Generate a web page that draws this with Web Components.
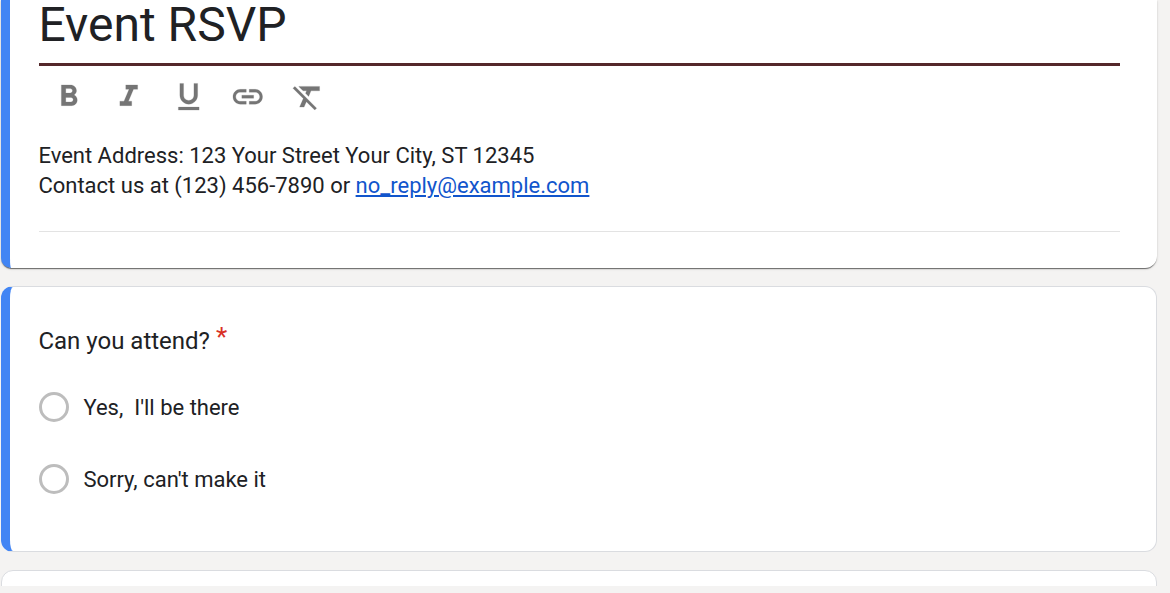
<!DOCTYPE html>
<html>
<head>
<meta charset="utf-8">
<title>Event RSVP</title>
<style>
html, body { margin: 0; height: 100%; background: #f4f3f2; overflow: hidden; }
body { font-family: Roboto, "Liberation Sans", sans-serif; color: #202124; }
</style>
</head>
<body>
<form-page>
  <form-card accent shadow>
    <title-input>Event RSVP</title-input>
    <format-toolbar></format-toolbar>
    <form-description>
      Event Address: 123 Your Street Your City, ST 12345<br>
      Contact us at (123) 456-7890 or <a href="#">no_reply@example.com</a>
    </form-description>
  </form-card>
  <form-card accent roomy>
    <form-question required>Can you attend?</form-question>
    <radio-option>Yes,&nbsp; I'll be there</radio-option>
    <radio-option>Sorry, can't make it</radio-option>
  </form-card>
  <form-card></form-card>
</form-page>

<script>
class FormPage extends HTMLElement {
  constructor() {
    super();
    this.attachShadow({mode: "open"});
    this.shadowRoot.innerHTML = `
<style>
:host { display: block; }
#clip { height: 586px; overflow: hidden; padding: 0 13.5px 0 1px; display: flex; flex-direction: column; gap: 18px; box-sizing: border-box; }
</style>
<div id="clip"><slot></slot></div>`;
  }
}
customElements.define("form-page", FormPage);

class FormCard extends HTMLElement {
  constructor() {
    super();
    this.attachShadow({mode: "open"});
    this.shadowRoot.innerHTML = `
<style>
:host { display: block; flex: none; box-sizing: border-box; background: #fff; border: 1px solid #dadce0; border-radius: 12px; padding: 0 35.5px 0 28px; min-height: 60px; }
:host([accent]) { border-left: 9px solid #4285f4; padding-left: 29px; }
:host([roomy]) { padding-bottom: 36px; }
:host([shadow]) { border: 0; border-left: 9px solid #4285f4; border-radius: 0 0 12px 10px; padding-right: 36.5px; box-shadow: 0 2px 1px -1px rgba(0,0,0,.4), 0 1px 1px rgba(0,0,0,.2), 0 1px 3px rgba(0,0,0,.12); }
</style>
<slot></slot>`;
  }
}
customElements.define("form-card", FormCard);

class TitleInput extends HTMLElement {
  constructor() {
    super();
    this.attachShadow({mode: "open"});
    this.shadowRoot.innerHTML = `
<style>
:host { display: flex; align-items: flex-end; height: 63px; overflow: hidden; border-bottom: 3px solid #54282a; font-size: 48px; line-height: 64px; color: #202124; }
span { display: block; margin: 0 0 6px -0.6px; white-space: nowrap; }
</style>
<span><slot></slot></span>`;
  }
}
customElements.define("title-input", TitleInput);

const ICONS = [
  "M15.6 10.79c.97-.67 1.65-1.77 1.65-2.79 0-2.26-1.75-4-4-4H7v14h7.04c2.09 0 3.71-1.7 3.71-3.79 0-1.52-.86-2.82-2.15-3.42zM10 6.5h3c.83 0 1.5.67 1.5 1.5s-.67 1.5-1.5 1.5h-3v-3zm3.5 9H10v-3h3.5c.83 0 1.5.67 1.5 1.5s-.67 1.5-1.5 1.5z",
  "M10 4v3h2.21l-3.42 8H6v3h8v-3h-2.21l3.42-8H18V4z",
  "M12 17c3.31 0 6-2.69 6-6V3h-2.5v8c0 1.93-1.57 3.5-3.5 3.5S8.5 12.93 8.5 11V3H6v8c0 3.31 2.69 6 6 6zm-7 2v2h14v-2H5z",
  "M3.9 12c0-1.71 1.39-3.1 3.1-3.1h4V7H7c-2.76 0-5 2.24-5 5s2.24 5 5 5h4v-1.9H7c-1.71 0-3.1-1.39-3.1-3.1zM8 13h8v-2H8v2zm9-6h-4v1.9h4c1.71 0 3.1 1.39 3.1 3.1s-1.39 3.1-3.1 3.1h-4V17h4c2.76 0 5-2.24 5-5s-2.24-5-5-5z",
  "M3.27 5L2 6.27l6.97 6.97L6.5 19h3l1.57-3.66L16.73 21 18 19.73 3.55 5.27 3.27 5zM6 5v.18L8.82 8h2.4l-.72 1.68 2.1 2.1L14.21 8H20V5H6z"
];

class FormatToolbar extends HTMLElement {
  constructor() {
    super();
    this.attachShadow({mode: "open"});
    this.shadowRoot.innerHTML = `
<style>
:host { display: flex; gap: 24.25px; padding: 13px 0 0 12px; height: 36px; }
svg { width: 35.5px; height: 35.5px; fill: #757575; stroke: #757575; stroke-width: .15; flex: none; }
</style>
${ICONS.map(d => `<svg viewBox="0 0 24 24"><path d="${d}"/></svg>`).join("")}`;
  }
}
customElements.define("format-toolbar", FormatToolbar);

class FormDescription extends HTMLElement {
  constructor() {
    super();
    this.attachShadow({mode: "open"});
    this.shadowRoot.innerHTML = `
<style>
:host { display: block; margin-top: 26px; padding-bottom: 40px; height: 50px; border-bottom: 1px solid #e3e3e3; font-size: 22px; line-height: 30px; margin-bottom: 36px; }
div { margin-left: -0.6px; }
::slotted(a) { color: #1155cc; }
</style>
<div><slot></slot></div>`;
  }
}
customElements.define("form-description", FormDescription);

class FormQuestion extends HTMLElement {
  constructor() {
    super();
    this.attachShadow({mode: "open"});
    this.shadowRoot.innerHTML = `
<style>
:host { display: block; padding: 39px 0 0 0; font-size: 24px; line-height: 30px; margin: 0 0 15px -0.6px; }
#star { color: #d93025; margin-left: 6px; font-size: 26px; line-height: 0; vertical-align: 3px; }
</style>
<slot></slot><span id="star" hidden>*</span>`;
    this.shadowRoot.querySelector("#star").hidden = !this.hasAttribute("required");
  }
}
customElements.define("form-question", FormQuestion);

class RadioOption extends HTMLElement {
  constructor() {
    super();
    this.attachShadow({mode: "open"});
    this.shadowRoot.innerHTML = `
<style>
:host { display: flex; align-items: center; gap: 14.4px; height: 72px; font-size: 22px; }
#dot { width: 30px; height: 30px; box-sizing: border-box; border: 3px solid #bdbdbd; border-radius: 50%; flex: none; }
</style>
<div id="dot"></div><div><slot></slot></div>`;
  }
}
customElements.define("radio-option", RadioOption);
</script>
</body>
</html>
